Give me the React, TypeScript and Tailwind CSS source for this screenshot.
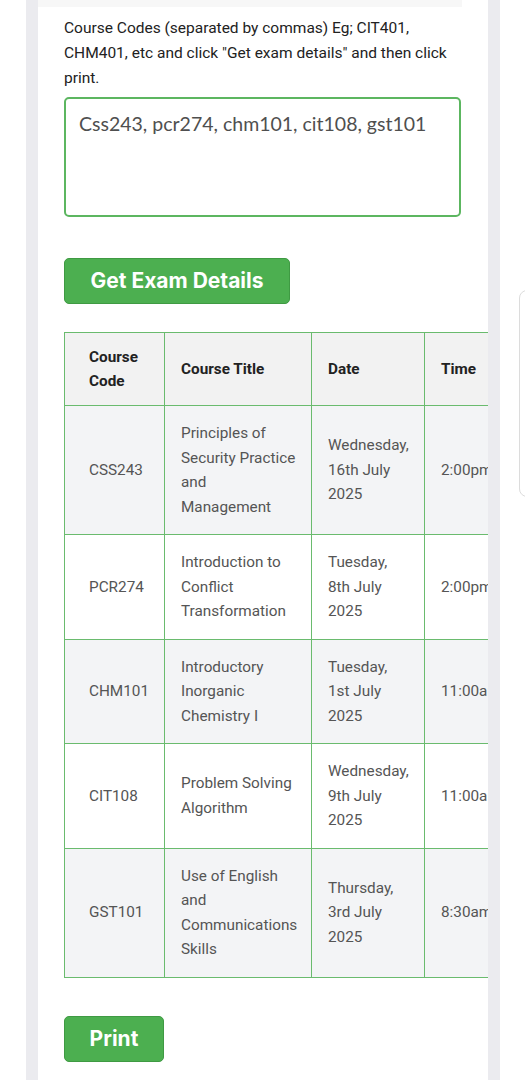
import React from 'react';

type Exam = {
  code: string;
  title: string;
  date: string;
  time: string;
};

const exams: Exam[] = [
  { code: 'CSS243', title: 'Principles of Security Practice and\nManagement', date: 'Wednesday, 16th July 2025', time: '2:00pm' },
  { code: 'PCR274', title: 'Introduction to Conflict Transformation', date: 'Tuesday, 8th July 2025', time: '2:00pm' },
  { code: 'CHM101', title: 'Introductory Inorganic Chemistry I', date: 'Tuesday, 1st July 2025', time: '11:00am' },
  { code: 'CIT108', title: 'Problem Solving Algorithm', date: 'Wednesday, 9th July 2025', time: '11:00am' },
  { code: 'GST101', title: 'Use of English and Communications Skills', date: 'Thursday, 3rd July 2025', time: '8:30am' },
];

const cell = 'border border-[#6abb6e] align-middle py-[15px] leading-[24.5px]';
const head = 'border border-[#6abb6e] align-middle py-3 leading-6 font-bold text-[#222]';

export default function App() {
  return (
    <div className="relative min-h-screen bg-white font-['Roboto',sans-serif]">
      <div className="ml-[26px] min-h-screen w-[474px] bg-[#ebebef] px-3">
        <div className="min-h-screen overflow-hidden bg-white pb-[18px]">
          <div className="h-[7px] w-[424px] bg-[#f7f7f7]" />

          <div className="pl-[26px]">
            <p className="mt-[9px] w-[397px] text-[15.5px] leading-[25px] text-[#222]">
              Course Codes (separated by commas) Eg; CIT401, CHM401, etc and click "Get exam details" and then click print.
            </p>

            <textarea
              readOnly
              defaultValue="Css243, pcr274, chm101, cit108, gst101"
              className="mt-[6px] block h-[120px] w-[397px] resize-none rounded-[5px] border-2 border-[#5cb660] px-[13px] py-[12px] font-['Lato',sans-serif] text-[19.5px] leading-[26px] text-[#4f4f4f] outline-none"
            />

            <button className="mt-[41px] block h-[46px] w-[226px] rounded-[5px] border border-[#3f9a43] bg-[#4caf50] font-['Inter',sans-serif] text-[21px] font-bold text-white">
              Get Exam Details
            </button>

            <table className="mt-[28px] w-[560px] table-fixed border-collapse text-[15.3px] text-[#555]">
              <colgroup>
                <col className="w-[100px]" />
                <col className="w-[147px]" />
                <col className="w-[113px]" />
                <col className="w-[200px]" />
              </colgroup>
              <thead>
                <tr className="bg-[#f2f2f2] text-left">
                  <th className={`${head} pl-6 pr-3`}>Course Code</th>
                  <th className={`${head} pl-4 pr-2`}>Course Title</th>
                  <th className={`${head} px-4`}>Date</th>
                  <th className={`${head} px-4`}>Time</th>
                </tr>
              </thead>
              <tbody>
                {exams.map((e, i) => (
                  <tr key={e.code} className={i % 2 === 0 ? 'bg-[#f3f4f6]' : 'bg-white'}>
                    <td className={`${cell} pl-6 pr-3`}>{e.code}</td>
                    <td className={`${cell} whitespace-pre-line pl-4 pr-2`}>{e.title}</td>
                    <td className={`${cell} px-4`}>{e.date}</td>
                    <td className={`${cell} px-4`}>{e.time}</td>
                  </tr>
                ))}
              </tbody>
            </table>

            <button className="mt-[38px] block h-[46px] w-[100px] rounded-[5px] border border-[#3f9a43] bg-[#4caf50] font-['Inter',sans-serif] text-[21px] font-bold text-white">
              Print
            </button>
          </div>
        </div>
      </div>

      {/* floating panel peeking in from the right edge */}
      <div className="absolute left-[519px] top-[290px] h-[207px] w-[40px] rounded-lg border border-[#dcdcdc] bg-white" />
    </div>
  );
}
